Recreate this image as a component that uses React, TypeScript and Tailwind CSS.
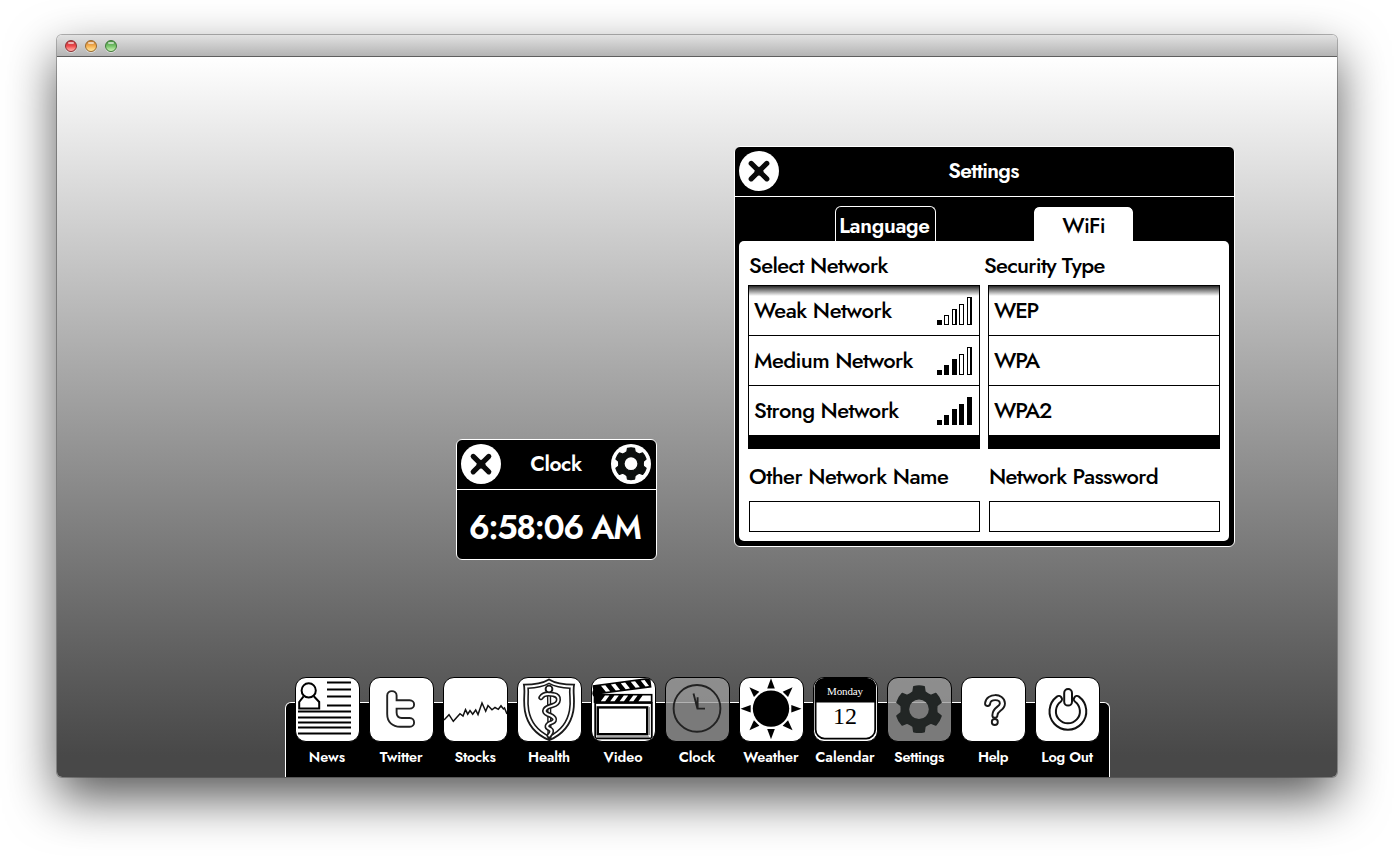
import React from "react";
import type { ReactNode } from "react";

function gearPath(cx: number, cy: number, tip: number, root: number, hole: number) {
  const at = (r: number, deg: number) => {
    const a = ((deg - 90) * Math.PI) / 180;
    return `${(cx + r * Math.cos(a)).toFixed(2)} ${(cy + r * Math.sin(a)).toFixed(2)}`;
  };
  let d = "";
  for (let i = 0; i < 6; i++) {
    const t = i * 60;
    d += `${i ? "L" : "M"}${at(root, t - 19)}L${at(tip, t - 13)}Q${at(tip * 1.03, t)} ${at(tip, t + 13)}L${at(root, t + 19)}Q${at(root * 0.95, t + 30)} ${at(root, t + 41)}`;
  }
  d += `ZM${cx - hole} ${cy}a${hole} ${hole} 0 1 0 ${hole * 2} 0a${hole} ${hole} 0 1 0 ${-hole * 2} 0Z`;
  return d;
}

function CloseButton() {
  return (
    <button className="size-10 shrink-0 rounded-full bg-white" aria-label="Close">
      <svg viewBox="0 0 40 40" className="size-10">
        <path d="M12.2 12.4 27.8 27.9M27.8 12.4 12.2 27.9" stroke="#0a0a0a" strokeWidth="5.1" strokeLinecap="round" />
        <path d="M20 15.4 24.8 20.2 20 25 15.2 20.2Z" fill="#0a0a0a" />
      </svg>
    </button>
  );
}

function GearButton() {
  return (
    <button className="size-10 shrink-0 rounded-full bg-white" aria-label="Options">
      <svg viewBox="0 0 40 40" className="size-10">
        <path d={gearPath(20, 19.7, 15.8, 12.7, 7)} fill="#0c0f0e" stroke="#0c0f0e" strokeWidth="1.2" strokeLinejoin="round" fillRule="evenodd" />
      </svg>
    </button>
  );
}

function NewsIcon() {
  return (
    <g fill="none" stroke="#000" strokeWidth="2">
      <circle cx="13.7" cy="13.4" r="7.1" />
      <path d="M8.6 19.3 4.2 25V31.4H24.2V25L18.8 19.3" />
      <path d="M32 5.5H56M32 12.5H56M32 19.5H56M32 28.5H56M3 34.5H56M3 40.5H56M3 45.5H56M3 50.5H56M3 56.5H56" />
    </g>
  );
}

function TwitterIcon() {
  return (
    <path
      d="M18.2 18.6C18.2 12.6 27.6 12.6 27.6 18.6V23.3H40.6C46.6 23.3 46.6 31.6 40.6 31.6H27.6V35.6C27.6 39 29.4 41 32.8 41H40.6C46.6 41 46.6 49.8 40.6 49.8H31.3C23.3 49.8 18.2 45 18.2 37Z"
      fill="none" stroke="#222" strokeWidth="1.9"
    />
  );
}

function StocksIcon() {
  return (
    <path
      d="M1 43 6 37.7 10.3 44.3 17 36.7 20 39 22.5 32.7 24.7 37.2 27 33.5 29.7 37.3 32.7 33 35 37.5 39 26 42.7 34.2 45 28.6 49 32.8 52 30.5 55.3 32.3 58 28.8 60.4 32 61.5 31 64 37"
      fill="none" stroke="#111" strokeWidth="1.5"
    />
  );
}

function HealthIcon() {
  const snake =
    "M24.4 20.6C27.5 15.6 33 16.6 37 17.6C44 19 43.5 26.6 36 28.6C28 30.6 25.6 34.6 31 37.2C38 39.4 40.4 43.2 35.5 45.4C29.6 47.4 29.2 50.4 33.4 52C36.4 53.6 34.6 56.4 32.6 58.6";
  return (
    <g fill="none" stroke="#1a1a1a" strokeLinecap="round" transform="translate(-.5 0)">
      <path d="M32.5 2.4C25 7 16 7.6 7.4 7.6C9 15 6.4 22 8.4 34C10.6 46 18 57 32.8 63.2C47 57 54.6 46 56.8 34C58.8 22 56 15 57.6 7.6C49 7.6 40 7 32.5 2.4Z" strokeWidth="1.8" />
      <path d="M32.5 6.4C26 10 19 11 11.6 11.2C12.4 18 10.4 24 12.2 33.4C14.2 44.4 20.6 53.6 32.8 59.4C44.6 53.6 51 44.4 53 33.4C54.8 24 52.6 18 53.4 11.2C46 11 39 10 32.5 6.4Z" strokeWidth="1.6" />
      <path d="M32.5 15.5 33 61" strokeWidth="4.2" />
      <path d="M32.5 16 33 60" stroke="#fff" strokeWidth="1.4" />
      <path d={snake} strokeWidth="5.2" />
      <path d={snake} stroke="#fff" strokeWidth="2" />
      <circle cx="32.5" cy="12" r="3.4" fill="#fff" strokeWidth="1.9" />
    </g>
  );
}

function VideoIcon() {
  return (
    <g>
      <g transform="rotate(-7.5 4 17)">
        <rect x="3.6" y="8.8" width="56.4" height="8.2" stroke="#000" strokeWidth="1.8" />
        <path d="M11 9.6H15.4L19.4 16.2H15ZM21 9.6H25.4L29.4 16.2H25ZM31 9.6H35.4L39.4 16.2H35ZM41 9.6H45.4L49.4 16.2H45ZM51 9.6H55L58.6 16.2H55Z" fill="#fff" />
      </g>
      <rect x="3.6" y="17.8" width="57" height="7.2" stroke="#000" strokeWidth="1.8" />
      <path d="M14 18.6H18.4L14.2 24.2H9.8ZM23.4 18.6H27.8L23.6 24.2H19.2ZM32.8 18.6H37.2L33 24.2H28.6ZM42.2 18.6H46.6L42.4 24.2H38ZM51.6 18.6H59.8V24.2H47.4Z" fill="#fff" />
      <circle cx="5.4" cy="16.2" r="4" />
      <rect x="4.2" y="26" width="56.6" height="35.4" fill="#fff" stroke="#000" strokeWidth="1.8" />
      <rect x="6.8" y="30.4" width="49.4" height="26.8" fill="#fff" stroke="#000" strokeWidth="2.4" />
      <path d="M58.4 30V58M6 59.8H58" stroke="#333" strokeWidth=".6" />
    </g>
  );
}

function ClockIcon() {
  return (
    <g fill="none" stroke="#222" strokeWidth="1.9">
      <circle cx="32" cy="31.4" r="23.4" />
      <path d="M28.5 16.4 32.4 31.6M32.6 20.2V31.6H40" />
    </g>
  );
}

function WeatherIcon() {
  return (
    <g>
      <circle cx="32" cy="31.6" r="18.2" />
      {[0, 45, 90, 135, 180, 225, 270, 315].map((a) => (
        <path key={a} d="M32 1.2 35.8 11.4H28.2Z" transform={`rotate(${a} 32 31.7)`} />
      ))}
    </g>
  );
}

function CalendarIcon() {
  return (
    <g>
      <rect x="2.6" y="1.6" width="59.6" height="60" rx="9" fill="#fff" stroke="#000" strokeWidth="1.8" />
      <path d="M1.8 25.4V11C1.8 5 6 1.4 12 1.4H53C59 1.4 63 5 63 11V25.4Z" />
      <text x="32" y="18" textAnchor="middle" fill="#fff" textLength="36" className="font-['Liberation_Serif',serif] text-[11px]">Monday</text>
      <text x="32" y="47.3" textAnchor="middle" className="font-['Liberation_Serif',serif] text-[24px] font-normal">12</text>
    </g>
  );
}

function SettingsIcon() {
  return (
    <path d={gearPath(32, 32.2, 23, 18.2, 10.6)} fill="#222625" stroke="#222625" strokeWidth="1.6" strokeLinejoin="round" fillRule="evenodd" />
  );
}

function HelpIcon() {
  const hook = "M26.6 26.4C27.4 18.8 41.2 18.6 41.4 26.4C41.4 32 34 31.4 33.9 38.2";
  return (
    <g fill="none" strokeLinecap="round">
      <path d={hook} stroke="#1a1a1a" strokeWidth="7" />
      <path d={hook} stroke="#fff" strokeWidth="3.2" />
      <circle cx="33.8" cy="45" r="3" stroke="#1a1a1a" strokeWidth="1.9" />
    </g>
  );
}

function LogOutIcon() {
  const ring = "M24.2 22.2A15.2 15.2 0 1 0 42.4 22.2";
  return (
    <g fill="none" strokeLinecap="round" transform="translate(-.4 0)">
      <path d={ring} stroke="#111" strokeWidth="8.4" />
      <path d={ring} stroke="#fff" strokeWidth="4.4" />
      <rect x="29.6" y="12" width="7.8" height="16.6" rx="3.9" fill="#fff" stroke="#111" strokeWidth="2" />
    </g>
  );
}

type DockEntry = { label: string; icon: ReactNode; active?: boolean; tracking: string };

const dock: DockEntry[] = [
  { label: "News", icon: <NewsIcon />, tracking: "tracking-[0px]" },
  { label: "Twitter", icon: <TwitterIcon />, tracking: "tracking-[-0.2px]" },
  { label: "Stocks", icon: <StocksIcon />, tracking: "tracking-[-0.25px]" },
  { label: "Health", icon: <HealthIcon />, tracking: "tracking-[-0.1px]" },
  { label: "Video", icon: <VideoIcon />, tracking: "tracking-[-0.1px]" },
  { label: "Clock", icon: <ClockIcon />, active: true, tracking: "tracking-[-0.1px]" },
  { label: "Weather", icon: <WeatherIcon />, tracking: "tracking-[0px]" },
  { label: "Calendar", icon: <CalendarIcon />, tracking: "tracking-[0px]" },
  { label: "Settings", icon: <SettingsIcon />, active: true, tracking: "tracking-[-0.3px]" },
  { label: "Help", icon: <HelpIcon />, tracking: "tracking-[-0.4px]" },
  { label: "Log Out", icon: <LogOutIcon />, tracking: "tracking-[-0.2px]" },
];

function Dock() {
  return (
    <nav className="absolute bottom-0 left-[228px] flex h-[75px] w-[825px] gap-[9px] rounded-t-md border border-b-0 border-white bg-black pl-[9px]">
      {dock.map(({ label, icon, active, tracking }) => (
        <div key={label} className="-mt-[26px] flex w-[65px] shrink-0 flex-col items-center">
          <div className={`size-[65px] shrink-0 overflow-hidden rounded-[11px] border border-black ${active ? "bg-[#9c9c9c]/78" : "bg-white"}`}>
            <svg viewBox="1 1 63 63" className="size-[63px]" fill="#000">{icon}</svg>
          </div>
          <span className={`mr-px text-[14.5px] leading-[30px] font-semibold whitespace-nowrap text-white ${tracking}`}>{label}</span>
        </div>
      ))}
    </nav>
  );
}

const bars = [
  "h-[5px] w-[5px]",
  "ml-0.5 h-2.5 w-[5px]",
  "ml-[3px] h-4 w-[5px]",
  "ml-0.5 h-[21px] w-[5px]",
  "ml-[3px] h-7 w-[5px]",
];

function Signal({ level }: { level: number }) {
  return (
    <div className="flex h-7 items-end">
      {bars.map((size, i) => (
        <span
          key={i}
          className={`${size} border border-black ${i === 2 || i === 4 ? "border-r-2" : ""} ${i < level ? "bg-black" : "bg-white"}`}
        />
      ))}
    </div>
  );
}

type Row = { name: string; level?: number; tracking: string };

const networks: Row[] = [
  { name: "Weak Network", level: 1, tracking: "tracking-[-0.45px]" },
  { name: "Medium Network", level: 3, tracking: "tracking-[-0.6px]" },
  { name: "Strong Network", level: 5, tracking: "tracking-[-0.55px]" },
];

const securityTypes: Row[] = [
  { name: "WEP", tracking: "tracking-[-1.3px]" },
  { name: "WPA", tracking: "tracking-[-1.3px]" },
  { name: "WPA2", tracking: "tracking-[-1.3px]" },
];

function List({ rows }: { rows: Row[] }) {
  return (
    <div className="relative flex h-[164px] w-[232px] flex-col gap-px bg-black p-px">
      {rows.map(({ name, level, tracking }) => (
        <div key={name} className="flex h-[49px] items-start justify-between bg-white pr-[7px] pl-[5px] leading-[48px]">
          <span className={tracking}>{name}</span>
          {level !== undefined && (
            <div className="pt-[11px]">
              <Signal level={level} />
            </div>
          )}
        </div>
      ))}
      <div className="absolute inset-x-px top-px h-[10px] bg-linear-to-b from-black/85 to-transparent" />
    </div>
  );
}

function SettingsWindow() {
  return (
    <section className="absolute top-[89px] left-[677px] flex h-[401px] w-[501px] flex-col rounded-md border border-white bg-black text-[22px]">
      <header className="flex h-[50px] shrink-0 items-start border-b border-white pt-1 pl-1">
        <CloseButton />
        <h2 className="w-[409px] text-center text-[21px] leading-[40px] font-semibold tracking-[-0.65px] text-white">Settings</h2>
      </header>
      <div className="flex h-11 shrink-0 items-end gap-[97px] pl-[100px] leading-[36px]">
        <div className="h-[35px] w-[101px] rounded-t-md border border-b-0 border-white pr-0.5 text-center text-[21px] leading-[38px] font-semibold tracking-[-0.3px] text-white">Language</div>
        <div className="h-[35px] w-[101px] rounded-t-md border border-b-0 border-black bg-white bg-clip-padding text-center tracking-[-0.8px]">WiFi</div>
      </div>
      <div className="ml-1 flex h-[300px] w-[490px] gap-2 rounded-[5px] bg-white pl-[9px]">
        <div className="flex w-[232px] flex-col">
          <div className="h-11 pl-px leading-[48px] tracking-[-0.58px]">Select Network</div>
          <List rows={networks} />
          <label className="flex flex-col">
            <span className="h-[52px] pl-px leading-[54px] tracking-[-0.5px]">Other Network Name</span>
            <input className="ml-px h-[31px] w-[231px] border border-black bg-white px-1 outline-none" />
          </label>
        </div>
        <div className="flex w-[232px] flex-col">
          <div className="-ml-1 h-11 leading-[48px] tracking-[-0.72px]">Security Type</div>
          <List rows={securityTypes} />
          <label className="flex flex-col">
            <span className="h-[52px] pl-px leading-[54px] tracking-[-0.62px]">Network Password</span>
            <input className="ml-px h-[31px] w-[231px] border border-black bg-white px-1 outline-none" />
          </label>
        </div>
      </div>
    </section>
  );
}

function ClockWindow() {
  return (
    <section className="absolute top-[382px] left-[399px] flex h-[121px] w-[201px] flex-col rounded-md border border-white bg-black text-white">
      <header className="flex h-[50px] shrink-0 items-start justify-between border-b border-white px-1 pt-1 pr-[5px]">
        <CloseButton />
        <h2 className="text-[21px] leading-[40px] font-semibold tracking-[-0.4px]">Clock</h2>
        <GearButton />
      </header>
      <div className="pr-1 text-center text-[33px] leading-[76px] font-semibold tracking-[-1.5px]">6:58:06 AM</div>
    </section>
  );
}

const lights = [
  "border-[#8e2f31] from-[#b8383b] via-[#f0474b] to-[#ffb3b0]",
  "border-[#9a6a2c] from-[#c27a35] via-[#f6b04f] to-[#ffeaa0]",
  "border-[#3f7a38] from-[#4a8f45] via-[#76c469] to-[#cdf5b8]",
];

export default function App() {
  return (
    <div className="h-[856px] w-[1394px] overflow-hidden bg-white px-[57px] pt-[35px] font-['Jost','Futura','Lato',sans-serif] font-medium text-black">
      <div className="flex h-[742px] w-[1280px] flex-col overflow-hidden rounded-[5px] shadow-[0_0_0_1px_rgba(0,0,0,0.28),0_21px_50px_rgba(0,0,0,0.66)]">
        <div className="flex h-[22px] shrink-0 items-center gap-2 border-b border-[#5e5e5e] bg-linear-to-b from-[#e2e2e2] to-[#b4b4b4] pl-2">
          {lights.map((tone) => (
            <span key={tone} className={`flex size-3 justify-center rounded-full border bg-linear-to-b pt-px shadow-[0_1px_0_rgba(255,255,255,0.45)] ${tone}`}>
              <span className="h-[2px] w-[6px] rounded-full bg-white/60" />
            </span>
          ))}
        </div>
        <main className="relative flex-1 bg-linear-to-b from-white to-[#484848] to-97%">
          <ClockWindow />
          <SettingsWindow />
          <Dock />
        </main>
      </div>
    </div>
  );
}
